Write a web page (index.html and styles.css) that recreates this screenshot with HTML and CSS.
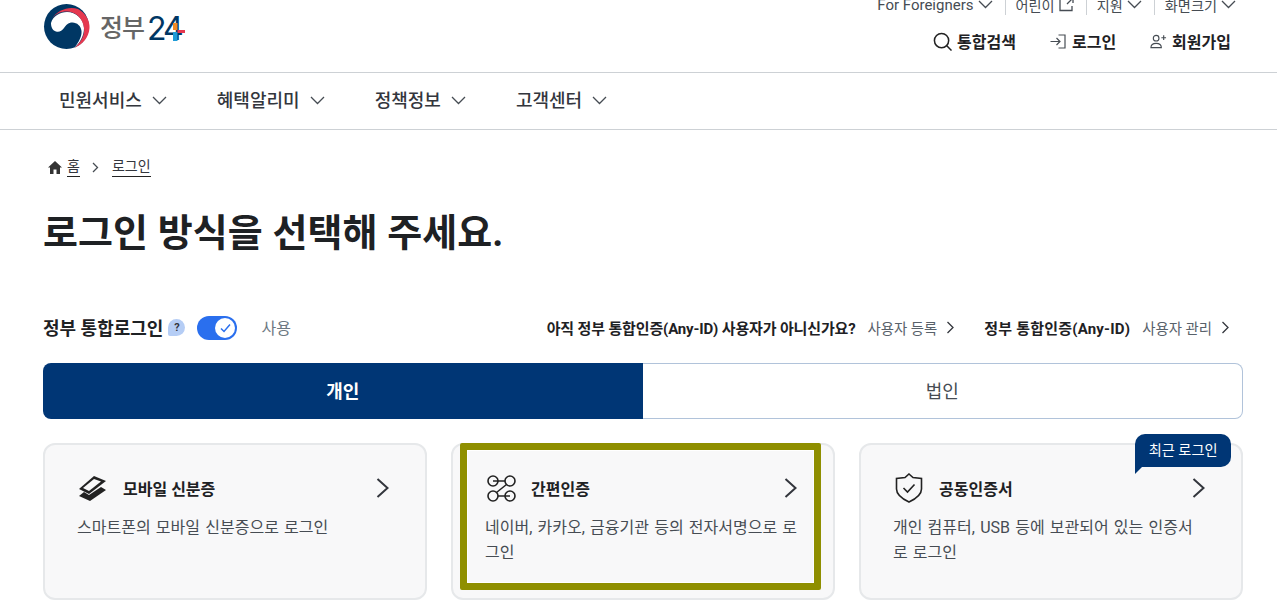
FILE: index.html
```html
<!DOCTYPE html>
<html lang="ko">
<head>
    <meta charset="UTF-8">
    <title>정부24 로그인</title>
    <link rel="stylesheet" href="styles.css">
</head>
<body>
    <header class="site-header">
        <div class="logo">
            <svg class="logo-mark" width="47" height="45" viewBox="0 0 47 45">
                <circle cx="23.500" cy="22.500" r="22.500" fill="#003764"/>
                <path d="M8 19C10 12 17 8 24 8C33 8 41 15 41 24C41 32 37 39 31.500 43.500C36 38 39 32 38.500 27C38 22 34 18.500 29.500 18.500C25 18.500 23 21 21 24C19 27 16 28.500 13 27.500C10 26.500 8 24 8 19Z" fill="#fff"/>
                <path d="M9 15C14 6 26 2 35 5C43 9 47 17 46.500 24C46 33 40 40 31.500 44C38 38 42 31 41 24C40 14 32 7.500 24 7.500C17 7.500 12 10 9 15Z" fill="#e5384f"/>
            </svg>
            <span class="logo-name">정부</span><span class="logo-num">24</span>
            <svg class="logo-plus" width="12" height="26" viewBox="0 0 12 26">
                <rect x="0" y="8" width="4.500" height="7" fill="#f08a24"/>
                <rect x="0" y="17" width="4.500" height="9" fill="#1e9bd7"/>
                <rect x="4.500" y="15" width="7.500" height="3" fill="#e5384f"/>
            </svg>
        </div>
        <div class="header-right">
            <ul class="util-menu">
                <li class="lang">For Foreigners <svg class="chev" width="15" height="9" viewBox="0 0 15 9"><path d="M1 1l6.500 6.500L14 1"/></svg></li>
                <li>어린이 <svg class="chev" width="15" height="15" viewBox="0 0 15 15"><path d="M6 1.500H1v12h12V9M8 7l5.500-5.500M9 1h5v5"/></svg></li>
                <li>지원 <svg class="chev" width="15" height="9" viewBox="0 0 15 9"><path d="M1 1l6.500 6.500L14 1"/></svg></li>
                <li>화면크기 <svg class="chev" width="15" height="9" viewBox="0 0 15 9"><path d="M1 1l6.500 6.500L14 1"/></svg></li>
            </ul>
            <div class="user-menu">
                <a><svg width="19" height="19" viewBox="0 0 20 20" class="line-icon dark"><circle cx="9" cy="9" r="7.500"/><path d="M14.500 14.500l5 5"/></svg>통합검색</a>
                <a><svg width="18" height="17" viewBox="0 0 17 17" class="line-icon"><path d="M1 8.500h9M7 5l3.500 3.500L7 12M9 2h6.500v13H9"/></svg>로그인</a>
                <a><svg width="17" height="16" viewBox="0 0 18 16" class="line-icon"><circle cx="6.500" cy="5" r="3"/><path d="M1 15c0-3 2-4.500 5.500-4.500S12 12 12 15zM12 4.500h5M14.500 2v5"/></svg>회원가입</a>
            </div>
        </div>
    </header>

    <nav class="main-nav">
        <a>민원서비스 <svg class="chev" width="15" height="9" viewBox="0 0 15 9"><path d="M1 1l6.500 6.500L14 1"/></svg></a>
        <a>혜택알리미 <svg class="chev" width="15" height="9" viewBox="0 0 15 9"><path d="M1 1l6.500 6.500L14 1"/></svg></a>
        <a>정책정보 <svg class="chev" width="15" height="9" viewBox="0 0 15 9"><path d="M1 1l6.500 6.500L14 1"/></svg></a>
        <a>고객센터 <svg class="chev" width="15" height="9" viewBox="0 0 15 9"><path d="M1 1l6.500 6.500L14 1"/></svg></a>
    </nav>

    <main class="content">
        <div class="breadcrumb">
            <svg width="14" height="13" viewBox="0 0 14 13"><path d="M7 0L0 6.500h2V13h3.500V8.500h3V13H12V6.500h2z" fill="#333"/></svg>
            <a>홈</a>
            <svg class="crumb-sep" width="7" height="11" viewBox="0 0 7 11"><path d="M1 1l4.500 4.500L1 10"/></svg>
            <a>로그인</a>
        </div>

        <h1>로그인 방식을 선택해 주세요.</h1>

        <div class="option-row">
            <div class="option-left">
                <strong>정부 통합로그인</strong>
                <span class="help">?</span>
                <span class="toggle"><span class="knob"><svg width="11" height="10" viewBox="0 0 11 10"><path d="M1 5.500L4 8.500 10 1.500"/></svg></span></span>
                <span class="toggle-label">사용</span>
            </div>
            <div class="option-right">
                <strong>아직 정부 통합인증(Any-ID) 사용자가 아니신가요?</strong>
                <a>사용자 등록 <svg width="9" height="13" viewBox="0 0 9 13"><path d="M1.500 1l5.500 5.500L1.500 12"/></svg></a>
                <strong class="second">정부 통합인증(Any-ID)</strong>
                <a>사용자 관리 <svg width="9" height="13" viewBox="0 0 9 13"><path d="M1.500 1l5.500 5.500L1.500 12"/></svg></a>
            </div>
        </div>

        <div class="tabs">
            <div class="tab active">개인</div>
            <div class="tab">법인</div>
        </div>

        <div class="cards">
            <div class="card">
                <div class="card-title">
                    <span class="card-icon">
                        <svg width="28" height="25" viewBox="0 0 28 25">
                            <path d="M15 0l12 5-17 13-10-5z" fill="#222"/>
                            <path d="M15 3l7 2.500-12 9.500-6-3z" fill="#f8f8f9"/>
                            <path d="M0 20l5-4 5 3 12-8 5 3-16 11z" fill="#222"/>
                        </svg>
                    </span>
                    <strong>모바일 신분증</strong>
                    <svg class="card-arrow" width="14" height="20" viewBox="0 0 14 20"><path d="M1.500 1l10 9-10 9"/></svg>
                </div>
                <p>스마트폰의 모바일 신분증으로 로그인</p>
            </div>
            <div class="card">
                <div class="card-title">
                    <span class="card-icon">
                        <svg class="line-icon dark" width="29" height="27" viewBox="0 0 29 27">
                            <circle cx="6" cy="6" r="5"/><circle cx="23" cy="6" r="5"/><circle cx="6" cy="21" r="5"/><circle cx="23" cy="21" r="5"/>
                            <path d="M6 6h12M23 21H11M19.500 9.500L9.500 17.500"/>
                        </svg>
                    </span>
                    <strong>간편인증</strong>
                    <svg class="card-arrow" width="14" height="20" viewBox="0 0 14 20"><path d="M1.500 1l10 9-10 9"/></svg>
                </div>
                <p>네이버, 카카오, 금융기관 등의 전자서명으로 로<br>그인</p>
                <div class="highlight"></div>
            </div>
            <div class="card">
                <div class="recent">최근 로그인</div>
                <div class="card-title">
                    <span class="card-icon">
                        <svg class="line-icon dark" width="28" height="30" viewBox="0 0 28 30">
                            <path d="M14 1l4 3.500 8.500 1V16c0 6-6 10-12.500 13C7.500 26 1.500 22 1.500 16V5.500L10 4.500z"/>
                            <path d="M8.500 15l4 4 7-7.500"/>
                        </svg>
                    </span>
                    <strong>공동인증서</strong>
                    <svg class="card-arrow" width="14" height="20" viewBox="0 0 14 20"><path d="M1.500 1l10 9-10 9"/></svg>
                </div>
                <p>개인 컴퓨터, USB 등에 보관되어 있는 인증서<br>로 로그인</p>
            </div>
        </div>
    </main>
</body>
</html>
```

FILE: styles.css
```css
* {
    box-sizing: border-box;
}

html, body {
    height: 612px;
    overflow: hidden;
}

body {
    margin: 0;
    background-color: #fff;
    color: #1e2124;
    font-family: 'Roboto', 'Noto Sans CJK KR', sans-serif;
}

ul {
    list-style: none;
    margin: 0;
    padding: 0;
}

.chev {
    fill: none;
    stroke: #464c53;
    stroke-width: 1.3;
}

.line-icon {
    fill: none;
    stroke: #464c53;
    stroke-width: 1.2;
}

.line-icon.dark {
    stroke: #222;
    stroke-width: 1.6;
}

/* header */
.site-header {
    display: flex;
    justify-content: space-between;
    height: 73px;
    padding: 0 46px 0 43px;
    border-bottom: 1px solid #cdd1d5;
    overflow: hidden;
}

.logo {
    position: relative;
    display: flex;
    align-items: flex-start;
    padding-top: 4px;
}

.logo-name {
    margin: 7px 0 0 10px;
    font-size: 25px;
    line-height: 36px;
    font-weight: 500;
    letter-spacing: -1px;
    color: #666;
}

.logo-num {
    margin: 5px 0 0 3px;
    font-family: 'Inter', sans-serif;
    font-size: 32px;
    line-height: 40px;
    font-weight: 400;
    letter-spacing: -3px;
    color: #003764;
}

.logo-plus {
    position: absolute;
    left: 130px;
    top: 15px;
}

.header-right {
    display: flex;
    flex-direction: column;
    align-items: flex-end;
    margin-top: -7px;
}

.util-menu {
    display: flex;
    height: 23px;
    align-items: center;
    margin-right: -5px;
    font-size: 14.200px;
    color: #464c53;
}

.util-menu li {
    display: flex;
    align-items: center;
    gap: 4px;
    padding-left: 10px;
    margin-left: 12px;
    border-left: 1px solid #cdd1d5;
    height: 20px;
}

.util-menu .lang {
    font-size: 15px;
    border-left: 0;
}

.user-menu {
    display: flex;
    gap: 34px;
    margin-top: 13px;
    font-size: 16px;
    font-weight: 700;
}

.user-menu a {
    display: flex;
    align-items: center;
    gap: 5px;
}

.user-menu a:first-child {
    margin-right: -1px;
}

/* nav */
.main-nav {
    display: flex;
    align-items: center;
    gap: 50px;
    height: 57px;
    padding: 0 0 5px 59px;
    border-bottom: 1px solid #cdd1d5;
    font-size: 18px;
    font-weight: 500;
    color: #33363d;
}

.main-nav a {
    display: flex;
    align-items: center;
    gap: 10px;
}

.main-nav .chev {
    margin-top: 3px;
}

/* content */
.content {
    padding: 0 34px 0 43px;
}

.breadcrumb {
    display: flex;
    align-items: center;
    gap: 5px;
    height: 20px;
    margin: 27px 0 0 5px;
    font-size: 14px;
    color: #33363d;
}

.breadcrumb a {
    border-bottom: 1px solid #222;
    line-height: 19px;
}

.crumb-sep {
    margin: 0 7.500px;
    fill: none;
    stroke: #464c53;
    stroke-width: 1.3;
}

h1 {
    margin: 30px 0 0;
    font-size: 38px;
    line-height: 52px;
    font-weight: 700;
    letter-spacing: 0.1px;
    color: #1e2124;
}

.option-row {
    display: flex;
    align-items: center;
    justify-content: space-between;
    height: 30px;
    margin-top: 53px;
}

.option-left {
    display: flex;
    align-items: center;
}

.option-left strong {
    font-size: 18px;
    font-weight: 700;
}

.help {
    display: flex;
    align-items: center;
    justify-content: center;
    width: 17px;
    height: 17px;
    margin: 1px 0 0 5px;
    border-radius: 50% 50% 50% 2px;
    background-color: #b5cdf5;
    color: #33363d;
    font-size: 11px;
    font-weight: 700;
}

.toggle {
    display: flex;
    justify-content: flex-end;
    align-items: center;
    width: 40px;
    height: 24px;
    margin: 2px 0 0 12px;
    padding-right: 1px;
    border-radius: 12px;
    background-color: #2a6fee;
}

.knob {
    display: flex;
    align-items: center;
    justify-content: center;
    width: 20px;
    height: 20px;
    margin-right: 1px;
    border-radius: 50%;
    background-color: #fff;
}

.knob svg {
    fill: none;
    stroke: #2a6fee;
    stroke-width: 1.5;
}

.toggle-label {
    margin-left: 24px;
    font-size: 16px;
    color: #6d7882;
}

.option-right {
    display: flex;
    align-items: center;
    font-size: 15px;
    letter-spacing: -0.15px;
    color: #1e2124;
    margin-right: 13px;
}

.option-right strong {
    font-weight: 700;
}

.option-right .second {
    margin-left: 29px;
    letter-spacing: 0.2px;
}

.option-right a {
    display: flex;
    align-items: center;
    gap: 9px;
    margin-left: 12px;
    font-size: 14.400px;
    letter-spacing: 0;
    color: #58616a;
}

.option-right a svg {
    fill: none;
    stroke: #33363d;
    stroke-width: 1.3;
}

.tabs {
    display: flex;
    width: 1200px;
    height: 56px;
    margin-top: 21px;
}

.tab {
    flex: 1;
    display: flex;
    align-items: center;
    justify-content: center;
    padding-bottom: 3px;
    border: 1px solid #b1c3da;
    border-left: 0;
    border-radius: 0 8px 8px 0;
    font-size: 18px;
    color: #464c53;
}

.tab.active {
    border: 0;
    border-radius: 8px 0 0 8px;
    background-color: #003675;
    color: #fff;
    font-weight: 700;
}

.cards {
    display: flex;
    gap: 24px;
    width: 1200px;
    margin-top: 24px;
}

.card {
    position: relative;
    flex: 1;
    height: 157px;
    padding: 27px 34px 0 32px;
    border: 2px solid #e6e8ea;
    border-radius: 12px;
    background-color: #f8f8f9;
}

.card-title {
    display: flex;
    align-items: center;
    height: 32px;
}

.card-icon {
    display: flex;
    width: 46px;
    padding-left: 2px;
}

.card-title strong {
    font-size: 16px;
    font-weight: 700;
}

.card-arrow {
    margin: 0 1.500px 0 auto;
    fill: none;
    stroke: #33363d;
    stroke-width: 2;
}

.card p {
    margin: 11px 0 0;
    font-size: 16px;
    line-height: 25px;
    word-spacing: 1.100px;
    letter-spacing: 0.03px;
    white-space: nowrap;
    color: #464c53;
}

.recent {
    position: absolute;
    top: -11px;
    right: 10px;
    padding: 0 13.500px;
    height: 33px;
    line-height: 32px;
    border-radius: 10px 10px 10px 0;
    background-color: #003675;
    color: #fff;
    font-size: 14.200px;
}

.recent::after {
    content: "";
    position: absolute;
    left: 0;
    bottom: -7px;
    border-top: 7px solid #003675;
    border-right: 7px solid transparent;
}

.highlight {
    position: absolute;
    top: -2px;
    left: 7px;
    width: 361px;
    height: 147px;
    border: 7px solid #8f8f00;
    border-radius: 2px;
    box-shadow: inset 0 0 0 1px #fff;
}
```
